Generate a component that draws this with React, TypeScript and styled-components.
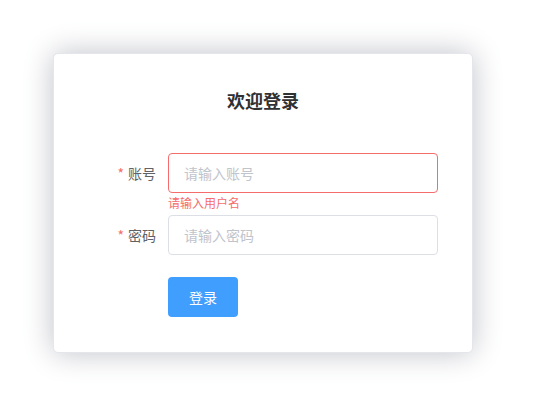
import React, { useState } from "react";
import styled, { createGlobalStyle } from "styled-components";

const GlobalStyle = createGlobalStyle`
  html, body {
    margin: 0;
    padding: 0;
    background: #fff;
  }
  body {
    font-family: "Noto Sans CJK SC", "Noto Sans", sans-serif;
  }
`;

export default function App() {
  const [account, setAccount] = useState("");
  const [password, setPassword] = useState("");
  return (
    <Page>
      <GlobalStyle />
      <Card>
        <Title>欢迎登录</Title>
        <Form onSubmit={(e) => e.preventDefault()}>
          <FormItem>
            <Label>
              <Star>*</Star>账号
            </Label>
            <Field>
              <Input
                $error
                placeholder="请输入账号"
                value={account}
                onChange={(e) => setAccount(e.target.value)}
              />
              <ErrorText>请输入用户名</ErrorText>
            </Field>
          </FormItem>
          <FormItem>
            <Label>
              <Star>*</Star>密码
            </Label>
            <Field>
              <Input
                type="password"
                placeholder="请输入密码"
                value={password}
                onChange={(e) => setPassword(e.target.value)}
              />
            </Field>
          </FormItem>
          <FormItem>
            <Label />
            <Field>
              <Button type="submit">登录</Button>
            </Field>
          </FormItem>
        </Form>
      </Card>
    </Page>
  );
}

const Page = styled.div`
  padding: 53px 0 0 53px;
  min-height: 100vh;
  box-sizing: border-box;
`;

const Card = styled.div`
  width: 420px;
  height: 300px;
  box-sizing: border-box;
  background: #fff;
  border-radius: 5px;
  border: 1px solid #e4e6ec;
  box-shadow: 0 0 30px #bfc1c8;
  padding: 33px 34px 0 34px;
`;

const Title = styled.h3`
  margin: 0;
  text-align: center;
  font-size: 18px;
  line-height: 26px;
  font-weight: bold;
  color: #303133;
`;

const Form = styled.form`
  margin-top: 40px;
`;

const FormItem = styled.div`
  display: flex;
  margin-bottom: 22px;
`;

const Label = styled.label`
  width: 80px;
  box-sizing: border-box;
  flex-shrink: 0;
  padding-right: 12px;
  text-align: right;
  font-size: 14px;
  line-height: 40px;
  color: #606266;
`;

const Star = styled.span`
  color: #f56c6c;
  margin-right: 4px;
`;

const Field = styled.div`
  position: relative;
  flex: 1;
`;

const Input = styled.input<{ $error?: boolean }>`
  display: block;
  width: 100%;
  height: 40px;
  box-sizing: border-box;
  border: 1px solid ${(p) => (p.$error ? "#f56c6c" : "#dcdfe6")};
  border-radius: 4px;
  padding: 0 15px;
  font-family: inherit;
  font-size: 14px;
  color: #606266;
  outline: none;
  &::placeholder {
    color: #c0c4cc;
  }
`;

const ErrorText = styled.div`
  position: absolute;
  top: 100%;
  left: 0;
  padding-top: 4px;
  font-size: 12px;
  line-height: 1;
  color: #f56c6c;
`;

const Button = styled.button`
  width: 70px;
  height: 40px;
  border: none;
  border-radius: 4px;
  background: #409eff;
  color: #fff;
  font-family: inherit;
  font-size: 14px;
  cursor: pointer;
`;
